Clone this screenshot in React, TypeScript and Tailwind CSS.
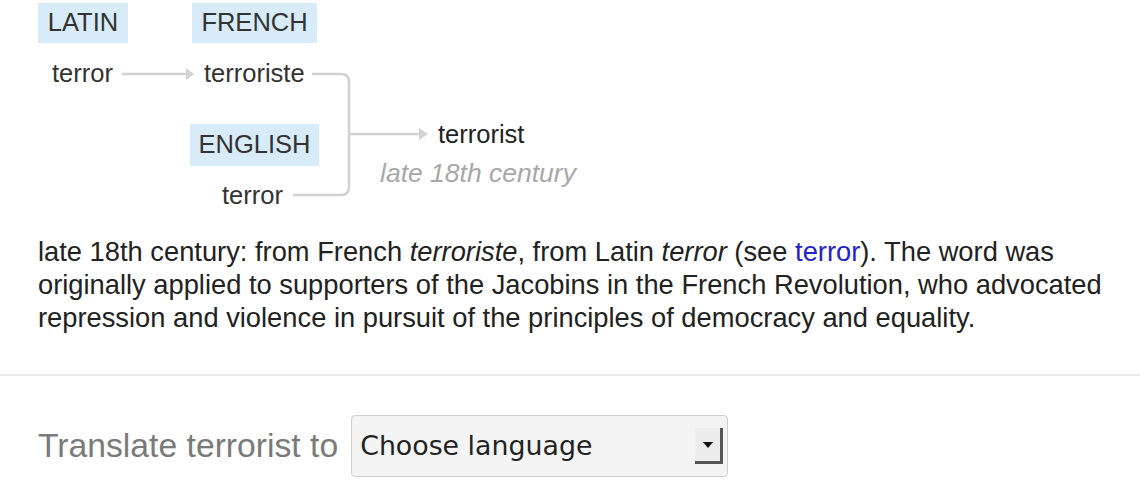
export default function App() {
  return (
    <div className="w-[1140px] h-[500px] overflow-hidden bg-white text-[#333] font-['Liberation_Sans',Arial,sans-serif]">
      {/* Etymology diagram: nodes placed on a free canvas */}
      <div className="relative h-[222px] text-[25.5px] leading-none">
        <svg className="absolute inset-0" width="1140" height="222" fill="none" stroke="#d2d2d2" strokeWidth="2.5">
          <path d="M122 74 H188" />
          <path d="M186 68 L194 74 L186 80 Z" fill="#d2d2d2" stroke="none" />
          <path d="M312 74 H341 Q349 74 349 82 V187 Q349 195 341 195 H293" />
          <path d="M349 134 H420" />
          <path d="M419 128 L428 134 L419 140 Z" fill="#d2d2d2" stroke="none" />
        </svg>

        <div className="absolute left-[38px] top-[3px] w-[90px] h-[40px] bg-[#d7ebf8] flex items-center justify-center">LATIN</div>
        <div className="absolute left-[192px] top-[3px] w-[125px] h-[40px] bg-[#d7ebf8] flex items-center justify-center">FRENCH</div>
        <div className="absolute left-[190px] top-[124px] w-[129px] h-[42px] bg-[#d7ebf8] flex items-center justify-center">ENGLISH</div>

        <span className="absolute left-[52px] top-[61px]">terror</span>
        <span className="absolute left-[204px] top-[61px]">terroriste</span>
        <span className="absolute left-[222px] top-[183px]">terror</span>
        <span className="absolute left-[438px] top-[122px] text-[#222]">terrorist</span>
        <span className="absolute left-[380px] top-[160px] italic text-[26.5px] text-[#a8a8a8]">late 18th century</span>
      </div>

      {/* Origin text */}
      <p className="mx-[38px] mt-[13px] text-[27.3px] leading-[33px] text-[#222] whitespace-nowrap">
        late 18th century: from French <i>terroriste</i>, from Latin <i>terror</i> (see{' '}
        <a className="text-[#2323c8]">terror</a>). The word was
        <br />
        originally applied to supporters of the Jacobins in the French Revolution, who advocated
        <br />
        repression and violence in pursuit of the principles of democracy and equality.
      </p>

      <div className="mt-[40px] h-[2px] bg-[#ebebeb]" />

      {/* Translate */}
      <div className="flex items-center gap-[13px] pl-[38px] pt-[39px]">
        <span className="text-[33.7px] leading-none text-[#7a7a7a]">Translate terrorist to</span>
        <div className="relative w-[377px] h-[62px] rounded-[4px] border border-[#cfcfcf] bg-[#f4f4f4] flex items-center pl-[8px]">
          <span className="font-['DejaVu_Sans',sans-serif] text-[26.8px] text-[#222]">Choose language</span>
          <div className="absolute right-[4px] top-[12px] w-[28px] h-[36px] bg-[#ececec] border-r-[3px] border-b-[3px] border-[#555] flex items-center justify-center">
            <svg width="10" height="6" viewBox="0 0 10 6">
              <path d="M0 0 H10 L5 6 Z" fill="#111" />
            </svg>
          </div>
        </div>
      </div>
    </div>
  );
}
